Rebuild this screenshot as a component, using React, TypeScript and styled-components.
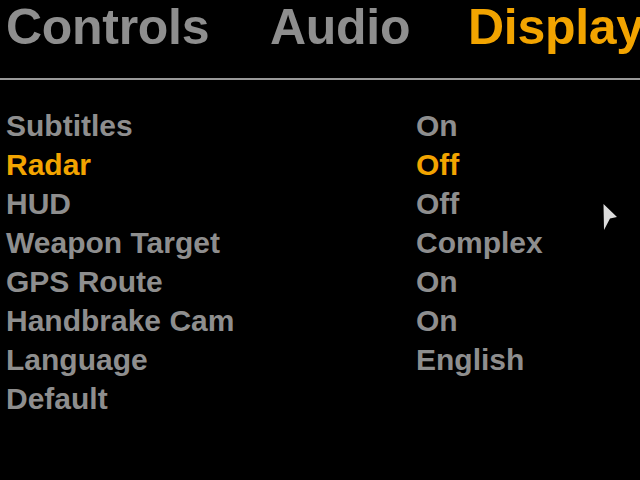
import React from "react";
import styled, { createGlobalStyle } from "styled-components";

const Global = createGlobalStyle`
  html, body { margin: 0; padding: 0; background: #000; }
  body { width: 640px; height: 480px; overflow: hidden; font-family: "Liberation Sans", Arial, sans-serif; }
`;

const Screen = styled.div`
  position: relative;
  width: 640px;
  height: 480px;
  background: #000;
  overflow: hidden;
`;

const Tabs = styled.div`
  display: flex;
  white-space: nowrap;
  padding: 0 0 24px 0;
  border-bottom: 2px solid #9a9a9a;
`;

const Tab = styled.div<{ $active?: boolean; $w: number }>`
  flex: 0 0 ${(p) => p.$w}px;
  font-size: 50px;
  line-height: 54px;
  font-weight: bold;
  letter-spacing: -0.3px;
  color: ${(p) => (p.$active ? "#f2a400" : "#8e8e8e")};
`;

const List = styled.div`
  display: grid;
  grid-template-columns: 410px 1fr;
  padding: 26px 0 0 6px;
`;

const Cell = styled.div<{ $active?: boolean }>`
  font-size: 30px;
  line-height: 39px;
  font-weight: bold;
  white-space: nowrap;
  color: ${(p) => (p.$active ? "#f2a400" : "#8e8e8e")};
`;

const Cursor = styled.svg`
  position: absolute;
  left: 603px;
  top: 204px;
`;

const rows: [string, string][] = [
  ["Subtitles", "On"],
  ["Radar", "Off"],
  ["HUD", "Off"],
  ["Weapon Target", "Complex"],
  ["GPS Route", "On"],
  ["Handbrake Cam", "On"],
  ["Language", "English"],
  ["Default", ""],
];

export default function App() {
  return (
    <Screen>
      <Global />
      <Tabs>
        <Tab $w={264} style={{ marginLeft: 6 }}>Controls</Tab>
        <Tab $w={198}>Audio</Tab>
        <Tab $w={200} $active>Display</Tab>
      </Tabs>
      <List>
        {rows.map(([label, value], i) => (
          <React.Fragment key={label}>
            <Cell $active={i === 1}>{label}</Cell>
            <Cell $active={i === 1}>{value}</Cell>
          </React.Fragment>
        ))}
      </List>
      <Cursor width="16" height="28" viewBox="0 0 16 28">
        <polygon points="0.5,0 14,13 7,14.5 1,26" fill="#dcdcdc" />
      </Cursor>
    </Screen>
  );
}
